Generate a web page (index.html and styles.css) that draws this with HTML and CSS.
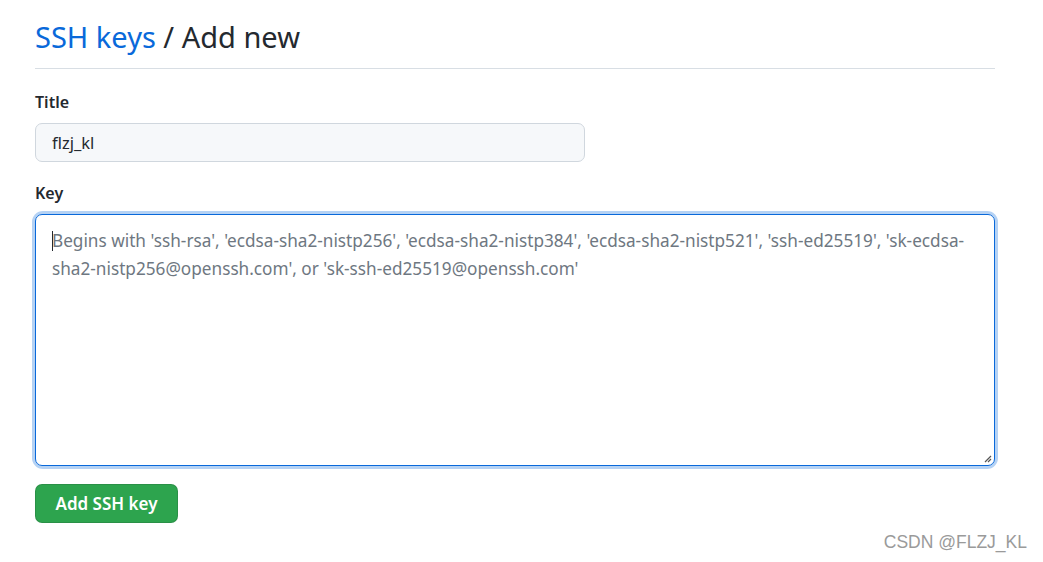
FILE: index.html
```html
<!DOCTYPE html>
<html lang="en">
<head>
<meta charset="utf-8">
<title>SSH keys / Add new</title>
<link rel="stylesheet" href="styles.css">
</head>
<body>
<main class="page">
  <div class="subhead">
    <h2 class="subhead-heading"><a class="crumb" href="#">SSH keys</a> / Add new</h2>
  </div>
  <form class="form">
    <div class="group">
      <label class="label" for="title">Title</label>
      <input class="input" id="title" type="text" value="flzj_kl">
    </div>
    <div class="group">
      <label class="label" for="key">Key</label>
      <div class="ta-wrap">
        <div class="textarea" id="key"><span class="caret"></span><span class="ph">Begins with 'ssh-rsa', 'ecdsa-sha2-nistp256', 'ecdsa-sha2-nistp384', 'ecdsa-sha2-nistp521', 'ssh-ed25519', 'sk-ecdsa-sha2-nistp256@openssh.com', or 'sk-ssh-ed25519@openssh.com'</span>
          <svg class="grip" width="10" height="10" viewBox="0 0 10 10"><path d="M9 3 L3 9 M9 6 L6 9" stroke="#555" stroke-width="1.2" fill="none"/></svg>
        </div>
      </div>
    </div>
    <button class="btn" type="button">Add SSH key</button>
  </form>
</main>
<div class="watermark">CSDN @FLZJ_KL</div>
</body>
</html>
```
FILE: styles.css
```css
* { box-sizing: border-box; }
html, body { margin: 0; padding: 0; background: #fff; }
body {
  font-family: "Noto Sans", "Open Sans", "DejaVu Sans", sans-serif;
  color: #24292f;
  width: 1043px;
  height: 562px;
  position: relative;
  overflow: hidden;
}
.page {
  padding: 14px 0 0 35px;
  width: 995px;
}
.subhead {
  border-bottom: 1px solid #d8dee4;
  padding-bottom: 9px;
}
.subhead-heading {
  margin: 0;
  font-size: 29px;
  font-weight: 400;
  line-height: 45px;
  color: #24292f;
}
.crumb { color: #0969da; text-decoration: none; }
.form { display: flex; flex-direction: column; padding-top: 22px; }
.group { display: flex; flex-direction: column; }
.group + .group { margin-top: 20px; }
.label {
  font-weight: 600;
  font-size: 16px;
  line-height: 22px;
  margin-bottom: 10px;
}
.input {
  width: 550px;
  height: 39px;
  border: 1px solid #d0d7de;
  border-radius: 7px;
  background: #f6f8fa;
  padding: 0 16px;
  font: inherit;
  font-size: 16.5px;
  color: #24292f;
  outline: none;
}
.ta-wrap {
  width: 960px;
  height: 252px;
  border-radius: 8px;
  box-shadow: 0 0 0 3px rgba(9, 105, 218, 0.3);
}
.textarea {
  position: relative;
  width: 100%;
  height: 100%;
  border: 1px solid #0969da;
  border-radius: 7px;
  background: #fff;
  padding: 12px 16px;
  font-size: 17.2px;
  line-height: 28px;
  color: #6e7781;
}
.caret {
  display: inline-block;
  width: 1px;
  height: 20px;
  background: #24292f;
  vertical-align: -4px;
  margin-right: -1px;
}
.grip { position: absolute; right: 2px; bottom: 2px; }
.btn {
  align-self: flex-start;
  margin-top: 18px;
  width: 143px;
  height: 39px;
  background: #2da44e;
  border: 1px solid rgba(27, 31, 36, 0.15);
  border-radius: 7px;
  color: #fff;
  font: inherit;
  font-weight: 600;
  font-size: 17px;
  padding: 0;
}
.watermark {
  position: absolute;
  right: 16px;
  top: 532px;
  font-family: "Liberation Sans", Arial, sans-serif;
  font-size: 17.5px;
  color: #9a9a9a;
}
```
